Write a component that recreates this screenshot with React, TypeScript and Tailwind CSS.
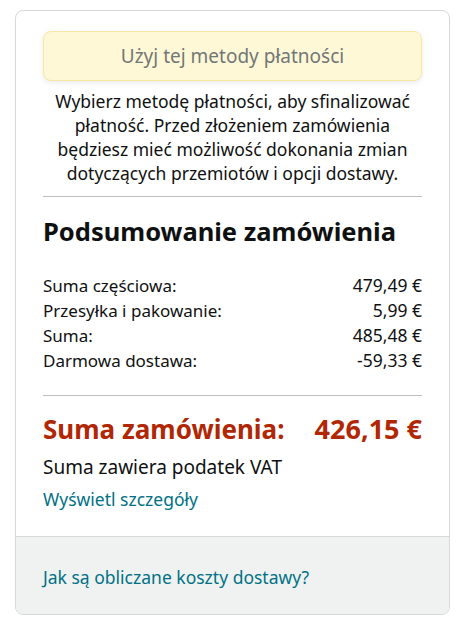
import React from 'react';

const rows: [string, string][] = [
  ['Suma częściowa:', '479,49 €'],
  ['Przesyłka i pakowanie:', '5,99 €'],
  ['Suma:', '485,48 €'],
  ['Darmowa dostawa:', '-59,33 €'],
];

const App: React.FC = () => {
  return (
    <div className="bg-white min-h-[633px] pt-[10px] pl-[15px] pr-[16px] font-['Noto_Sans',sans-serif] text-[#0f1111]">
      <div className="rounded-lg border border-[#d5d9d9] overflow-hidden">
        <div className="px-[27px] pt-[20px] pb-[25px]">
          <div className="h-[50px] rounded-lg bg-[#fff8d6] border border-[#f7e7a1] shadow-[0_2px_5px_rgba(213,217,217,0.5)] flex items-center justify-center text-[19px] text-[#727777]">
            Użyj tej metody płatności
          </div>
          <p className="mt-[8px] text-center text-[17.5px] leading-[24px] whitespace-nowrap">
            Wybierz metodę płatności, aby sfinalizować
            <br />
            płatność. Przed złożeniem zamówienia
            <br />
            będziesz mieć możliwość dokonania zmian
            <br />
            dotyczących przemiotów i opcji dostawy.
          </p>
          <div className="mt-[11px] border-t border-[#bbbfbf]" />
          <h2 className="mt-[18px] text-[25.5px] font-bold leading-[32px]">Podsumowanie zamówienia</h2>
          <div className="mt-[26px] text-[17px] leading-[25px]">
            {rows.map(([label, value]) => (
              <div key={label} className="flex justify-between">
                <span>{label}</span>
                <span className="text-[17.5px]">{value}</span>
              </div>
            ))}
          </div>
          <div className="mt-[22px] border-t border-[#bbbfbf]" />
          <div className="mt-[17px] flex justify-between text-[26px] font-bold leading-[32px] text-[#b12704]">
            <span>Suma zamówienia:</span>
            <span className="text-[27px]">426,15 €</span>
          </div>
          <p className="mt-[9px] text-[19px] leading-[26px]">Suma zawiera podatek VAT</p>
          <a className="block mt-[7px] text-[17.5px] leading-[24px] text-[#007185]">Wyświetl szczegóły</a>
        </div>
        <div className="bg-[#f0f2f2] border-t border-[#d5d9d9] px-[27px] pt-[28px] pb-[25px]">
          <a className="block text-[17.5px] leading-[24px] text-[#007185]">Jak są obliczane koszty dostawy?</a>
        </div>
      </div>
    </div>
  );
};

export default App;
